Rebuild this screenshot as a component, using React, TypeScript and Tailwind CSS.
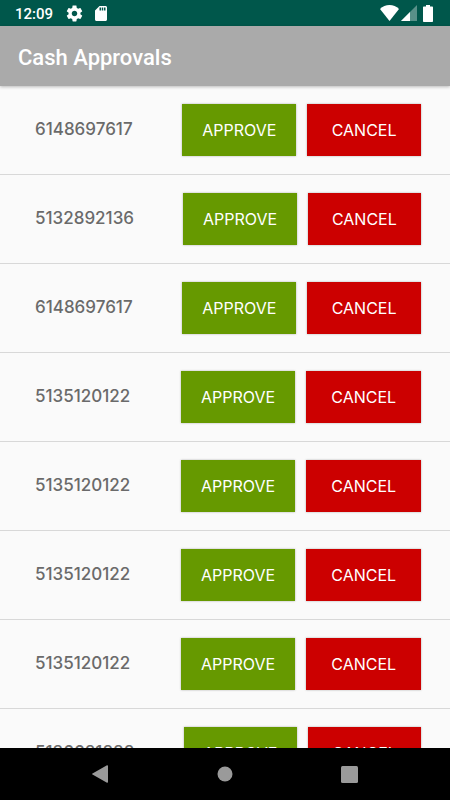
import React from 'react'

const requests = [
  { id: 1, phone: '6148697617' },
  { id: 2, phone: '5132892136' },
  { id: 3, phone: '6148697617' },
  { id: 4, phone: '5135120122' },
  { id: 5, phone: '5135120122' },
  { id: 6, phone: '5135120122' },
  { id: 7, phone: '5135120122' },
  { id: 8, phone: '5136681888' },
]

function StatusBar() {
  return (
    <div className="flex h-[26px] shrink-0 items-center bg-[#00574b] pl-[15px] pr-[17px] text-white">
      <span className="pt-[2px] text-[15px] leading-none font-medium">12:09</span>
      <div className="ml-3 flex items-center gap-2">
        <svg width="19" height="19" viewBox="0 0 24 24" fill="currentColor">
          <path d="M19.43 12.98c.04-.32.07-.64.07-.98s-.03-.66-.07-.98l2.11-1.65c.19-.15.24-.42.12-.64l-2-3.46c-.12-.22-.39-.3-.61-.22l-2.49 1c-.52-.4-1.08-.73-1.69-.98l-.38-2.65C14.46 2.18 14.25 2 14 2h-4c-.25 0-.46.18-.49.42l-.38 2.65c-.61.25-1.17.59-1.69.98l-2.49-1c-.23-.09-.49 0-.61.22l-2 3.46c-.13.22-.07.49.12.64l2.11 1.65c-.04.32-.07.65-.07.98s.03.66.07.98l-2.11 1.65c-.19.15-.24.42-.12.64l2 3.46c.12.22.39.3.61.22l2.49-1c.52.4 1.08.73 1.69.98l.38 2.65c.03.24.24.42.49.42h4c.25 0 .46-.18.49-.42l.38-2.65c.61-.25 1.17-.59 1.69-.98l2.49 1c.23.09.49 0 .61-.22l2-3.46c.12-.22.07-.49-.12-.64l-2.11-1.65zM12 15.5c-1.93 0-3.5-1.57-3.5-3.5s1.57-3.5 3.5-3.5 3.5 1.57 3.5 3.5-1.57 3.5-3.5 3.5z" />
        </svg>
        <svg width="18" height="19" viewBox="0 0 24 24" fill="currentColor">
          <path d="M18 2h-8L4.02 8 4 20c0 1.1.9 2 2 2h12c1.1 0 2-.9 2-2V4c0-1.1-.9-2-2-2zm-6 6h-2V4h2v4zm3 0h-2V4h2v4zm3 0h-2V4h2v4z" />
        </svg>
      </div>
      <div className="ml-auto flex items-center gap-[2px]">
        <svg width="19" height="16" viewBox="0 0 19 16" fill="currentColor">
          <path d="M9.5 16 0 4C2.500 1.500 6 0 9.500 0S16.500 1.500 19 4z" />
        </svg>
        <svg width="16" height="16" viewBox="0 0 16 16" fill="currentColor">
          <path opacity=".35" d="M0 16H16V0z" />
          <path d="M0 16H9V7z" />
        </svg>
        <svg className="ml-1" width="10" height="17" viewBox="0 0 10 17" fill="currentColor">
          <path d="M9 1.500H7V0H3v1.500H1c-.6 0-1 .4-1 1V16c0 .6.4 1 1 1h8c.6 0 1-.4 1-1V2.500c0-.6-.4-1-1-1z" />
        </svg>
      </div>
    </div>
  )
}

function ApprovalRow({ phone }: { phone: string }) {
  return (
    <li className="flex items-center gap-[11px] border-b border-[#d8d8d8] py-[18px] pl-[35px] pr-[29px]">
      <span className="grow text-[17px] font-medium text-[#6a6a6a]">{phone}</span>
      <button className="h-[52px] w-[75px] grow bg-[#669900] text-base text-white shadow-[0_0_2px_rgba(0,0,0,0.3)]">
        APPROVE
      </button>
      <button className="h-[52px] w-[75px] grow bg-[#cc0000] text-base text-white shadow-[0_0_2px_rgba(0,0,0,0.3)]">
        CANCEL
      </button>
    </li>
  )
}

function NavBar() {
  return (
    <nav className="grid h-[52px] shrink-0 grid-cols-3 items-center bg-black px-[38px] text-[#9a9a9a]">
      <button aria-label="Back" className="flex justify-center">
        <svg width="16" height="18" viewBox="0 0 16 18" fill="currentColor">
          <path d="M15 .3c.5-.2 1 .1 1 .6v16.200c0 .5-.5.800-1 .6L.5 9.600c-.6-.3-.6-.9 0-1.200z" />
        </svg>
      </button>
      <button aria-label="Home" className="flex justify-center">
        <svg width="16" height="16" viewBox="0 0 16 16" fill="currentColor">
          <circle cx="8" cy="8" r="7.500" />
        </svg>
      </button>
      <button aria-label="Recent apps" className="flex justify-center">
        <svg width="17" height="17" viewBox="0 0 17 17" fill="currentColor">
          <rect width="17" height="17" rx="1.500" />
        </svg>
      </button>
    </nav>
  )
}

export default function App() {
  return (
    <div className="flex h-screen flex-col bg-[#fafafa] font-['Roboto',sans-serif]">
      <StatusBar />
      <header className="z-10 flex h-[60px] shrink-0 items-center bg-[#aaaaaa] px-[18px] pt-[3px] shadow-[0_1px_3px_rgba(0,0,0,0.25)]">
        <h1 className="text-[22px] font-medium text-white">Cash Approvals</h1>
      </header>
      <main className="min-h-0 flex-1 overflow-hidden">
        <ul className="font-['Inter',sans-serif]">
          {requests.map((r) => (
            <ApprovalRow key={r.id} phone={r.phone} />
          ))}
        </ul>
      </main>
      <NavBar />
    </div>
  )
}
